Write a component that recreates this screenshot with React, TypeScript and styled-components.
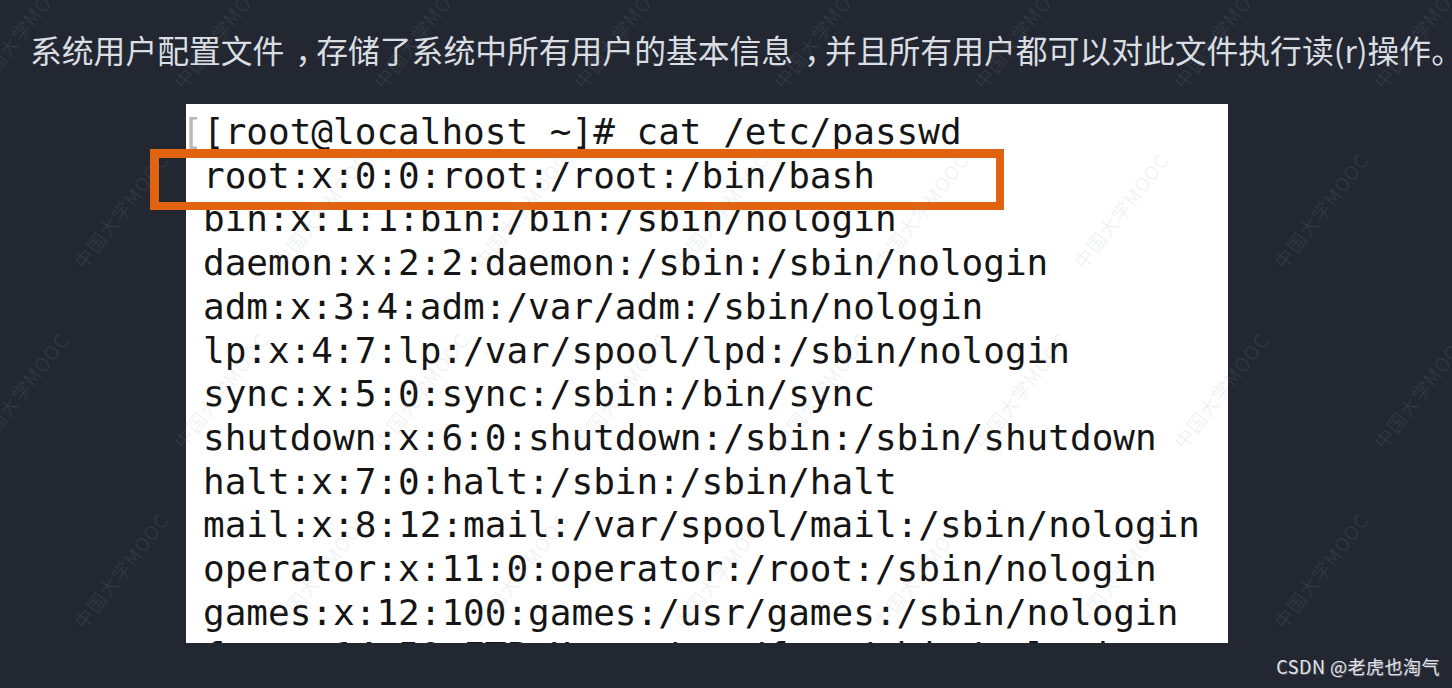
import React from "react";
import styled, { createGlobalStyle } from "styled-components";

const Global = createGlobalStyle`
  html, body {
    margin: 0;
    padding: 0;
    width: 1452px;
    height: 688px;
    overflow: hidden;
    background: #222732;
  }
  #root { width: 1452px; height: 688px; }
`;

const Page = styled.div`
  position: relative;
  width: 1452px;
  height: 688px;
  overflow: hidden;
  background: #222732;
  display: flex;
  flex-direction: column;
  padding: 27px 0 0 0;
  box-sizing: border-box;
  gap: 33px;
`;

const Heading = styled.p`
  margin: 0 0 0 30px;
  font-family: "Noto Sans CJK SC", "Noto Sans", sans-serif;
  font-size: 31.8px;
  line-height: 44px;
  color: #dadee3;
  white-space: nowrap;
`;

const Punct = styled.span`
  display: inline-block;
  width: 1em;
  padding-left: 0.34em;
  box-sizing: border-box;
  font-feature-settings: "halt";
  white-space: nowrap;
`;

const Figure = styled.div`
  position: relative;
  margin-left: 186px;
  width: 1042px;
  height: 539px;
`;

const Shot = styled.div`
  width: 100%;
  height: 100%;
  background: #ffffff;
  overflow: hidden;
  padding: 6px 0 0 17px;
  box-sizing: border-box;
  display: flex;
  flex-direction: column;
`;

const Line = styled.div`
  font-family: "DejaVu Sans Mono", "Liberation Mono", monospace;
  font-size: 36px;
  line-height: 43.7px;
  color: #151515;
  white-space: pre;
  flex: none;
`;

const Ghost = styled.span`
  display: inline-block;
  width: 1ch;
  margin-left: -1ch;
  color: #b8b8b8;
`;

const Highlight = styled.div`
  position: absolute;
  left: -36px;
  top: 45px;
  width: 854px;
  height: 61px;
  box-sizing: border-box;
  border: 9px solid #e2630f;
  border-right-width: 8px;
  border-bottom-width: 8px;
`;

const Marks = styled.div`
  position: absolute;
  inset: -60px 0 0 -80px;
  display: grid;
  grid-template-columns: repeat(9, 200px);
  grid-auto-rows: 180px;
  pointer-events: none;
`;

const Mark = styled.span<{ $shift: boolean }>`
  display: flex;
  align-items: center;
  justify-content: center;
  transform: translateX(${(p) => (p.$shift ? 100 : 0)}px) rotate(-52deg);
  font-family: "Noto Sans CJK SC", "Noto Sans", sans-serif;
  font-size: 19px;
  letter-spacing: 1px;
  color: rgba(150, 155, 165, 0.14);
  white-space: nowrap;
`;

const Credit = styled.div`
  position: absolute;
  right: 12px;
  bottom: 9px;
  font-family: "Noto Sans CJK SC", "Noto Sans", sans-serif;
  font-size: 18px;
  letter-spacing: 0.5px;
  color: #e2e4e8;
  text-shadow: 1px 1px 0 rgba(120, 125, 135, 0.6);
`;

const lines = [
  "root:x:0:0:root:/root:/bin/bash",
  "bin:x:1:1:bin:/bin:/sbin/nologin",
  "daemon:x:2:2:daemon:/sbin:/sbin/nologin",
  "adm:x:3:4:adm:/var/adm:/sbin/nologin",
  "lp:x:4:7:lp:/var/spool/lpd:/sbin/nologin",
  "sync:x:5:0:sync:/sbin:/bin/sync",
  "shutdown:x:6:0:shutdown:/sbin:/sbin/shutdown",
  "halt:x:7:0:halt:/sbin:/sbin/halt",
  "mail:x:8:12:mail:/var/spool/mail:/sbin/nologin",
  "operator:x:11:0:operator:/root:/sbin/nologin",
  "games:x:12:100:games:/usr/games:/sbin/nologin",
  "ftp:x:14:50:FTP User:/var/ftp:/sbin/nologin",
];

export default function App() {
  const marks = Array.from({ length: 9 * 5 }, (_, i) => i);
  return (
    <>
      <Global />
      <Page>
        <Heading>
          系统用户配置文件<Punct>，</Punct>存储了系统中所有用户的基本信息<Punct>，</Punct>并且所有用户都可以对此文件执行读(r)操作。
        </Heading>
        <Figure>
          <Shot>
            <Line>
              <Ghost>[</Ghost>[root@localhost ~]# cat /etc/passwd
            </Line>
            {lines.map((l) => (
              <Line key={l}>{l}</Line>
            ))}
          </Shot>
          <Highlight />
        </Figure>
        <Marks>
          {marks.map((i) => (
            <Mark key={i} $shift={Math.floor(i / 9) % 2 === 1}>
              中国大学MOOC
            </Mark>
          ))}
        </Marks>
        <Credit>CSDN @老虎也淘气</Credit>
      </Page>
    </>
  );
}
